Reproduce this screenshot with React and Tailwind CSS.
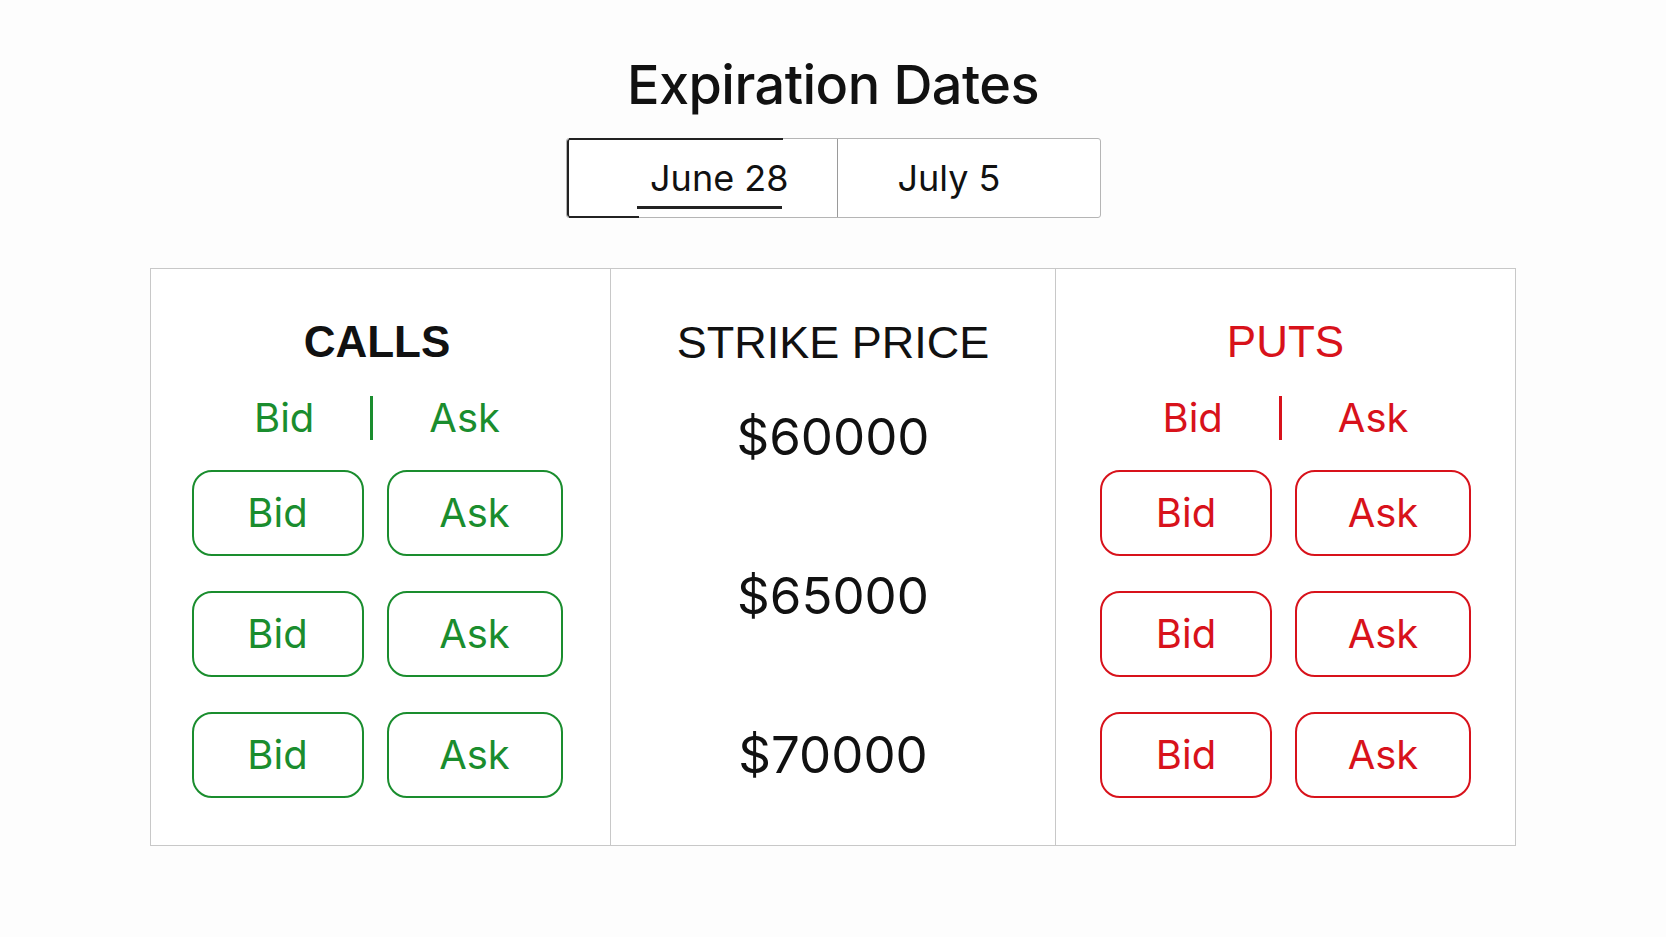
import React, { useState } from 'react'

const strikes = ['$60000', '$65000', '$70000']

function SideHeader({ color }) {
  return (
    <div className={`flex items-center justify-center gap-[56px] mt-[32px] ${color}`}>
      <span className="text-[40px] leading-none font-['Inter',sans-serif]">Bid</span>
      <span className="w-[3px] h-[44px] bg-current" />
      <span className="text-[40px] leading-none font-['Inter',sans-serif]">Ask</span>
    </div>
  )
}

function QuoteButtons({ color }) {
  return (
    <div className="grid grid-cols-[172px_176px] gap-x-[23px] gap-y-[35px] mt-[30px]">
      {strikes.map((s) => (
        <React.Fragment key={s}>
          <button className={`h-[86px] rounded-[20px] border-2 ${color} flex items-center justify-center text-[40px] leading-none font-['Inter',sans-serif]`}>
            Bid
          </button>
          <button className={`h-[86px] rounded-[20px] border-2 ${color} flex items-center justify-center text-[40px] leading-none font-['Inter',sans-serif]`}>
            Ask
          </button>
        </React.Fragment>
      ))}
    </div>
  )
}

export default function App() {
  const [active, setActive] = useState(0)

  return (
    <div className="min-h-screen bg-[#fdfdfd] pt-[58px] flex flex-col items-center">
      <h1 className="text-[54px] leading-none font-medium text-[#111] font-['Inter',sans-serif] tracking-[-0.01em]">
        Expiration Dates
      </h1>

      <div className="mt-[26px] flex w-[535px] h-[80px] border border-[#b5b5b5] rounded-[3px] bg-white">
        <button
          onClick={() => setActive(0)}
          className="relative w-[270px] h-full flex items-center justify-end pr-[48px] border-l-2 border-[#222] rounded-l-[3px] text-[36px] font-['Inter',sans-serif] text-[#111]"
        >
          <span className="absolute left-0 top-[-1px] w-[214px] h-[2px] bg-[#222]" />
          <span className="absolute left-0 bottom-[-1px] w-[70px] h-[2px] bg-[#222]" />
          June 28
          {active === 0 && <span className="absolute left-[68px] bottom-[8px] w-[145px] h-[3px] bg-[#222]" />}
        </button>
        <button
          onClick={() => setActive(1)}
          className="flex-1 h-full flex items-center pl-[60px] border-l border-[#9a9a9a] text-[36px] font-['Inter',sans-serif] text-[#111]"
        >
          July 5
        </button>
      </div>

      <div className="mt-[50px] flex w-[1366px] h-[578px] border border-[#c8c8c8] bg-white">
        <div className="w-[459px] pr-[7px] pt-[51px] flex flex-col items-center">
          <h2 className="text-[44px] leading-none font-bold text-[#111] font-['Liberation_Sans',sans-serif]">CALLS</h2>
          <SideHeader color="text-[#1a8d2e]" />
          <QuoteButtons color="border-[#1a8d2e] text-[#1a8d2e]" />
        </div>

        <div className="w-[445px] border-l border-[#c8c8c8] pt-[51px] flex flex-col items-center">
          <h2 className="text-[45px] leading-none text-[#111] font-['Liberation_Sans',sans-serif]">STRIKE PRICE</h2>
          <div className="mt-[46px] flex flex-col items-center gap-[108px]">
            {strikes.map((s) => (
              <span key={s} className="text-[51px] leading-none text-[#111] font-['Inter',sans-serif]">
                {s}
              </span>
            ))}
          </div>
        </div>

        <div className="flex-1 border-l border-[#c8c8c8] pt-[51px] flex flex-col items-center">
          <h2 className="text-[44px] leading-none text-[#d8121b] font-['Liberation_Sans',sans-serif]">PUTS</h2>
          <SideHeader color="text-[#d8121b]" />
          <QuoteButtons color="border-[#d8121b] text-[#d8121b]" />
        </div>
      </div>
    </div>
  )
}
